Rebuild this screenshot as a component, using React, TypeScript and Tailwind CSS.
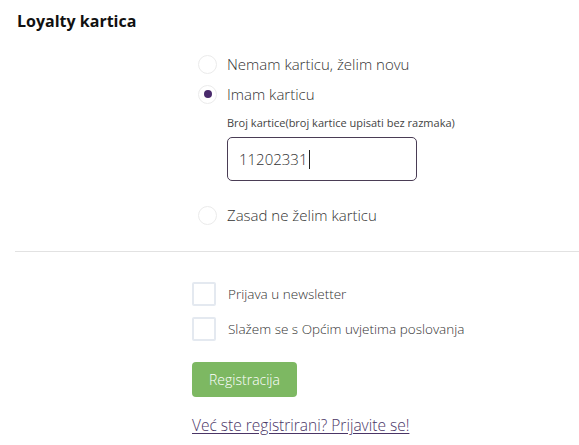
const RADIOS_TOP = [
  { label: "Nemam karticu, želim novu", checked: false },
  { label: "Imam karticu", checked: true },
];

function Radio({ checked }: { checked: boolean }) {
  return (
    <span className="w-[19px] h-[19px] rounded-full border border-[#ebebeb] flex items-center justify-center shrink-0">
      {checked && <span className="w-[8px] h-[8px] rounded-full bg-[#4a2a6c]" />}
    </span>
  );
}

function Checkbox() {
  return <span className="w-[24px] h-[24px] border-2 border-[#e4e9f0] rounded-[2px] shrink-0" />;
}

export default function App() {
  return (
    <div
      className="w-[579px] h-[445px] bg-white text-[#333] overflow-hidden"
      style={{ fontFamily: "'Open Sans', 'Noto Sans', sans-serif" }}
    >
      <h2 className="pl-[17px] pt-[10px] h-[42px] text-[16px] font-bold text-[#111] leading-[22px]">
        Loyalty kartica
      </h2>

      <div className="pl-[198px] pt-[7px]">
        {RADIOS_TOP.map((r) => (
          <div key={r.label} className="flex items-center gap-[10px] h-[30px]">
            <Radio checked={r.checked} />
            <span className="text-[15px] font-light text-[#333]">{r.label}</span>
          </div>
        ))}

        <div className="pl-[29px] pt-[7px]">
          <p className="text-[11px] text-[#444] leading-[14px] h-[21px]">
            Broj kartice(broj kartice upisati bez razmaka)
          </p>
          <div className="w-[190px] h-[44px] border border-[#4a3d55] rounded-[5px] flex items-center pl-[11px] text-[15px] font-light text-[#333]">
            11202331<span className="w-px h-[19px] bg-[#222] ml-px" />
          </div>
        </div>

        <div className="flex items-center gap-[10px] h-[30px] mt-[19px]">
          <Radio checked={false} />
          <span className="text-[15px] font-light text-[#333]">Zasad ne želim karticu</span>
        </div>
      </div>

      <div className="ml-[15px] mt-[21px] border-t border-[#e2e2e2]" />

      <div className="pl-[192px] pt-[30px]">
        <div className="flex items-center gap-[12px] h-[24px]">
          <Checkbox />
          <span className="text-[13.5px] font-light text-[#333]">Prijava u newsletter</span>
        </div>
        <div className="flex items-center gap-[12px] h-[24px] mt-[11px]">
          <Checkbox />
          <span className="text-[13.5px] font-light text-[#333]">Slažem se s Općim uvjetima poslovanja</span>
        </div>

        <button className="mt-[21px] w-[105px] h-[35px] rounded-[4px] bg-[#7db862] text-white text-[14px] font-light">
          Registracija
        </button>

        <div className="mt-[16px]">
          <a href="#" className="text-[15.5px] font-light text-[#4a3566] underline underline-offset-2">
            Već ste registrirani? Prijavite se!
          </a>
        </div>
      </div>
    </div>
  );
}
